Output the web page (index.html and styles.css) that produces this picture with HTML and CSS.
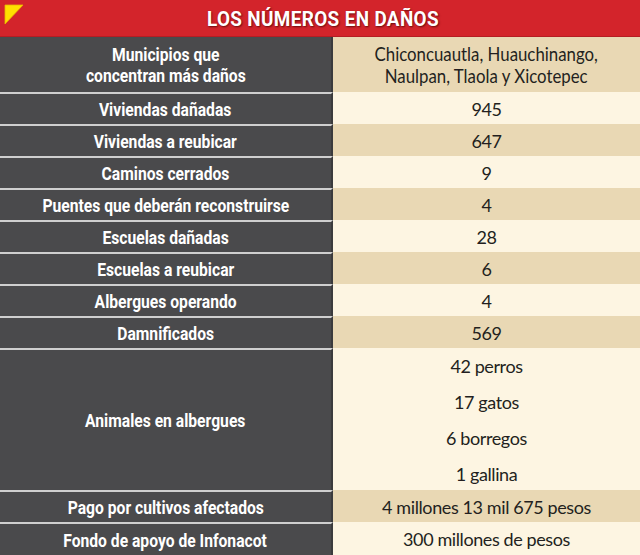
FILE: index.html
```html
<!DOCTYPE html>
<html lang="es">
<head>
<meta charset="utf-8">
<title>Los números en daños</title>
<link rel="stylesheet" href="styles.css">
</head>
<body>
<div class="card">
  <header class="head">
    <svg class="corner" width="24" height="26" viewBox="0 0 24 26"><polygon points="5,5 23,5 5,24" fill="#ffe000" stroke="#e6b800" stroke-width="0.8"/></svg>
    <h1 class="title"><span class="sqt">LOS NÚMEROS EN DAÑOS</span></h1>
  </header>
  <div class="grid">
    <div class="lab first"><span class="sq">Municipios que<br>concentran más daños</span></div>
    <div class="val alt cond"><span class="sqv">Chiconcuautla, Huauchinango,<br>Naulpan, Tlaola y Xicotepec</span></div>

    <div class="lab"><span class="sq">Viviendas dañadas</span></div>
    <div class="val">945</div>

    <div class="lab"><span class="sq">Viviendas a reubicar</span></div>
    <div class="val alt">647</div>

    <div class="lab"><span class="sq">Caminos cerrados</span></div>
    <div class="val">9</div>

    <div class="lab"><span class="sq">Puentes que deberán reconstruirse</span></div>
    <div class="val alt">4</div>

    <div class="lab"><span class="sq">Escuelas dañadas</span></div>
    <div class="val">28</div>

    <div class="lab"><span class="sq">Escuelas a reubicar</span></div>
    <div class="val alt">6</div>

    <div class="lab"><span class="sq">Albergues operando</span></div>
    <div class="val">4</div>

    <div class="lab"><span class="sq">Damnificados</span></div>
    <div class="val alt">569</div>

    <div class="lab"><span class="sq">Animales en albergues</span></div>
    <div class="val list">
      <span>42 perros</span>
      <span>17 gatos</span>
      <span>6 borregos</span>
      <span>1 gallina</span>
    </div>

    <div class="lab"><span class="sq">Pago por cultivos afectados</span></div>
    <div class="val alt">4 millones 13 mil 675 pesos</div>

    <div class="lab"><span class="sq">Fondo de apoyo de Infonacot</span></div>
    <div class="val">300 millones de pesos</div>
  </div>
</div>
</body>
</html>
```

FILE: styles.css
```css
html, body {
  margin: 0;
  padding: 0;
  background: #ffffff;
}
.card {
  width: 640px;
  height: 555px;
  overflow: hidden;
  font-family: Roboto, "Liberation Sans", sans-serif;
}
.sq {
  display: inline-block;
  transform: scaleX(0.87);
  transform-origin: center;
  white-space: nowrap;
}
.sqt {
  display: inline-block;
  transform: scaleX(0.9);
  transform-origin: center;
  white-space: nowrap;
}
.sqv {
  display: inline-block;
  transform: scaleX(0.885);
  transform-origin: center;
  white-space: nowrap;
}
.head {
  position: relative;
  height: 37px;
  background: #d3242b;
  display: flex;
  align-items: center;
  justify-content: center;
  box-sizing: border-box;
  border-bottom: 1px solid #b51d23;
}
.corner {
  position: absolute;
  left: 0;
  top: 0;
}
.title {
  margin: 0;
  color: #ffffff;
  font-size: 21px;
  font-weight: bold;
  letter-spacing: 0.4px;
  text-shadow: 1px 1px 2px rgba(60, 0, 0, 0.7);
  line-height: 1;
  padding-top: 2px;
  padding-left: 6px;
}
.grid {
  display: grid;
  grid-template-columns: 333px 1fr;
  grid-template-rows: 55px repeat(8, 32px) 142px 32px 33px;
}
.lab {
  background: #4a4a4c;
  color: #ffffff;
  font-weight: bold;
  font-size: 18px;
  display: flex;
  align-items: center;
  justify-content: center;
  text-align: center;
  border-top: 2px solid #cfcfcf;
  border-right: 2px solid #3b3b3d;
  box-sizing: border-box;
  line-height: 21px;
  padding-top: 1px;
}
.lab.first {
  border-top: 0;
}
.val {
  background: #fdf5e2;
  color: #231f20;
  font-family: Lato, "Open Sans", sans-serif;
  font-size: 18px;
  letter-spacing: -0.4px;
  display: flex;
  align-items: center;
  justify-content: center;
  text-align: center;
  box-sizing: border-box;
  line-height: 22px;
  padding-top: 1px;
}
.val.alt {
  background: #e9d8b4;
}
.val.cond {
  font-size: 19px;
  letter-spacing: 0;
  line-height: 22px;
}
.val.list {
  flex-direction: column;
  justify-content: flex-start;
  gap: 14px;
  padding-top: 7px;
}
.val.list span {
  display: block;
}
```
